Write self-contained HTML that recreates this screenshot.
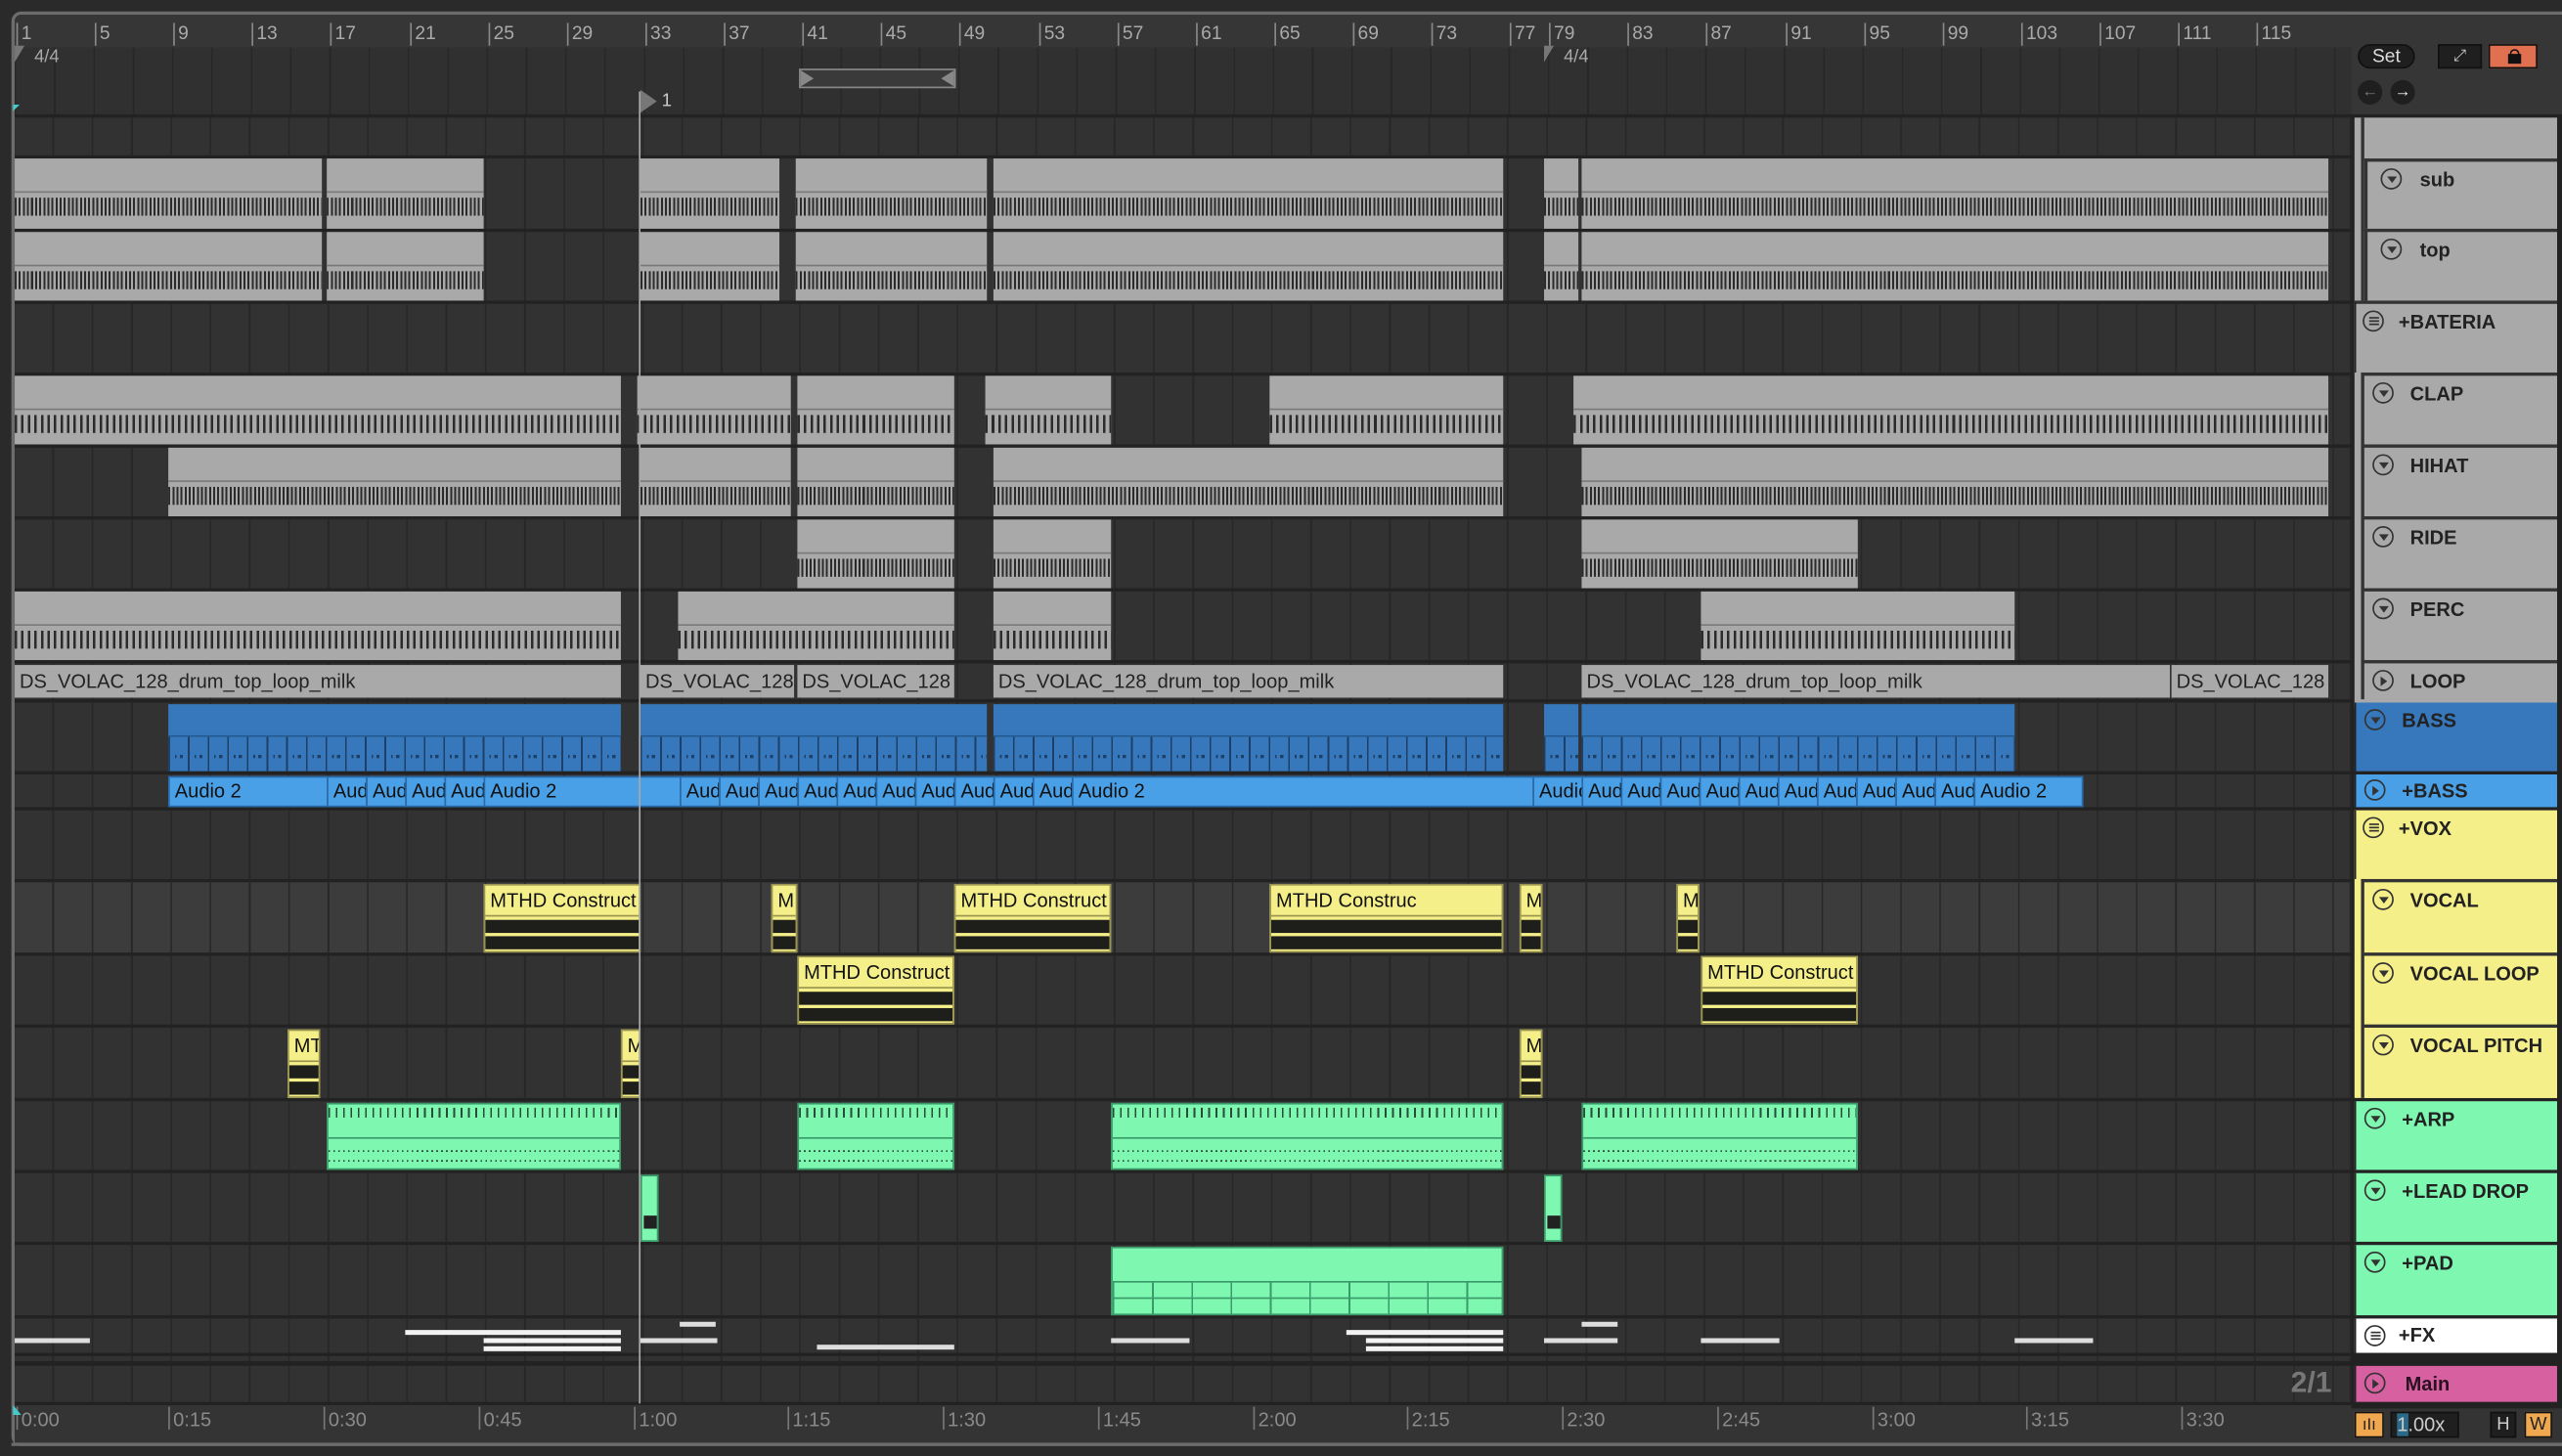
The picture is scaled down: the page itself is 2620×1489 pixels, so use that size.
<!DOCTYPE html>
<html><head><meta charset="utf-8"><style>
html,body{margin:0;padding:0;background:#2a2a2a;width:2620px;height:1488px;overflow:hidden}
#s{position:absolute;left:0;top:0;width:1568px;height:891px;transform:scale(1.67092);transform-origin:0 0;font-family:"Liberation Sans",sans-serif}
.a{position:absolute;box-sizing:border-box}
.frame{left:7px;top:7px;width:1570px;height:878px;border:2px solid #6c6c6c;border-radius:6px;background:#333}
.lane{position:absolute;left:9px;width:1430px;background:#323232 repeating-linear-gradient(90deg,#272727 0 1px,transparent 1px 24.06px);background-position:-1px 0}
.num{position:absolute;top:14px;font-size:11.5px;color:#aaa;border-left:1px solid #888;padding-left:2px;height:14px;line-height:14px}
.g{position:absolute;box-sizing:border-box;background:
 repeating-linear-gradient(90deg,#2b2b2b 0 1.2px,transparent 1.2px 2.5px) 0 24px/100% 11px no-repeat,
 linear-gradient(#7a7a7a,#7a7a7a) 0 20px/100% 1px no-repeat,#a9a9a9}
.gs{background:repeating-linear-gradient(90deg,#2b2b2b 0 1.5px,transparent 1.5px 4px) 0 24px/100% 11px no-repeat,linear-gradient(#7a7a7a,#7a7a7a) 0 20px/100% 1px no-repeat,#a9a9a9}
.lp{position:absolute;height:20px;top:407px;background:#a9a9a9;font-size:12px;line-height:20px;color:#222;padding-left:3px;overflow:hidden;white-space:nowrap;box-sizing:border-box}
.b{position:absolute;top:431px;height:41px;box-sizing:border-box;background:
 repeating-linear-gradient(90deg,transparent 0 4px,#1d3f68 4px 5px,transparent 5px 7px,#1d3f68 7px 9px,transparent 9px 12.03px) 0 31px/100% 2px no-repeat,
 repeating-linear-gradient(90deg,#1d3f68 0 1px,transparent 1px 12.03px) 0 20px/100% 21px no-repeat,
 linear-gradient(#245a92,#245a92) 0 19px/100% 1px no-repeat,#3678bb}
.ab{position:absolute;top:475px;height:19px;background:#4aa0e6;border-top:1px solid #2a6aaa;border-bottom:1px solid #2a6aaa;border-left:1px solid #2a6aaa;font-size:12px;line-height:17px;color:#111;padding-left:3px;box-sizing:border-box;overflow:hidden;white-space:nowrap}
.y{position:absolute;height:42px;box-sizing:border-box;border:1px solid #9a9450;font-size:12px;line-height:18px;color:#111;padding-left:3px;overflow:hidden;white-space:nowrap;background:
 linear-gradient(#1e1e1a,#1e1e1a) 0 21px/100% 8px no-repeat,
 linear-gradient(#1e1e1a,#1e1e1a) 0 31px/100% 8px no-repeat,
 linear-gradient(#9a9450,#9a9450) 0 18px/100% 1px no-repeat,#f4ef88}
.gr{position:absolute;top:675px;height:41px;box-sizing:border-box;border:1px solid #3a9a6a;background:
 repeating-linear-gradient(90deg,#2a4a3a 0 1px,transparent 1px 3px) 0 28px/100% 1px no-repeat,
 repeating-linear-gradient(90deg,#2a4a3a 0 1px,transparent 1px 3px) 0 34px/100% 1px no-repeat,
 repeating-linear-gradient(90deg,#2a4a3a 0 1px,transparent 1px 4.5px) 0 2px/100% 6px no-repeat,
 linear-gradient(#3a9a6a,#3a9a6a) 0 20px/100% 1px no-repeat,#7ef7b0}
.fx{position:absolute;height:3px;background:#f2f2f2}
.tp{position:absolute;left:1441px;width:124px;box-sizing:border-box;font-size:12px;font-weight:bold;color:#222;padding-left:32px;line-height:22px;border-left:1px solid #222}
.ic{position:absolute;left:8px;top:4px;width:13px;height:13px;border:1.3px solid #333;border-radius:50%;box-sizing:border-box}
.ic:after{content:"";position:absolute;left:2.5px;top:4px;border-left:3.2px solid transparent;border-right:3.2px solid transparent;border-top:4px solid #333}
.ic.pl:after{left:4px;top:2.5px;border-top:3.2px solid transparent;border-bottom:3.2px solid transparent;border-left:4.5px solid #333;border-right:none}
.ic.ls:after{left:2.5px;top:3px;width:6px;height:5px;border:none;background:linear-gradient(#333,#333) 0 0/100% 1.2px no-repeat,linear-gradient(#333,#333) 0 2.2px/100% 1.2px no-repeat,linear-gradient(#333,#333) 0 4.2px/100% 1.2px no-repeat}
.tl{position:absolute;top:861px;font-size:12px;color:#8a8a8a;border-left:1px solid #777;padding-left:2px;height:14px;line-height:16px}
</style></head><body><div id="s">
<div class="a frame"></div>
<div class="a" style="left:9px;top:9px;width:1430px;height:20px;background:#363636;border-radius:4px 0 0 0"></div>
<div class="a" style="left:9px;top:29px;width:1430px;height:41px;background:#303030 repeating-linear-gradient(90deg,#272727 0 1px,transparent 1px 24.06px)"></div>
<div class="num" style="left:10px">1</div><div class="num" style="left:58px">5</div><div class="num" style="left:106px">9</div><div class="num" style="left:154px">13</div><div class="num" style="left:202px">17</div><div class="num" style="left:251px">21</div><div class="num" style="left:299px">25</div><div class="num" style="left:347px">29</div><div class="num" style="left:395px">33</div><div class="num" style="left:443px">37</div><div class="num" style="left:491px">41</div><div class="num" style="left:539px">45</div><div class="num" style="left:587px">49</div><div class="num" style="left:636px">53</div><div class="num" style="left:684px">57</div><div class="num" style="left:732px">61</div><div class="num" style="left:780px">65</div><div class="num" style="left:828px">69</div><div class="num" style="left:876px">73</div><div class="num" style="left:924px">77</div><div class="num" style="left:948px">79</div><div class="num" style="left:996px">83</div><div class="num" style="left:1044px">87</div><div class="num" style="left:1093px">91</div><div class="num" style="left:1141px">95</div><div class="num" style="left:1189px">99</div><div class="num" style="left:1237px">103</div><div class="num" style="left:1285px">107</div><div class="num" style="left:1333px">111</div><div class="num" style="left:1381px">115</div>
<div class="a" style="left:9px;top:28px;width:0;height:0;border-left:6px solid #777;border-bottom:10px solid transparent"></div>
<div class="a" style="left:21px;top:29px;font-size:11px;color:#aaa">4/4</div>
<div class="a" style="left:945px;top:28px;width:0;height:0;border-left:6px solid #777;border-bottom:10px solid transparent"></div>
<div class="a" style="left:957px;top:29px;font-size:11px;color:#aaa">4/4</div>
<div class="a" style="left:489px;top:42px;width:96px;height:12px;border:1px solid #888;background:#3a3a3a"></div>
<div class="a" style="left:490px;top:43px;width:0;height:0;border-left:8px solid #888;border-top:5px solid transparent;border-bottom:5px solid transparent"></div>
<div class="a" style="left:576px;top:43px;width:0;height:0;border-right:8px solid #888;border-top:5px solid transparent;border-bottom:5px solid transparent"></div>
<div class="a" style="left:392px;top:55px;width:0;height:0;border-left:10px solid #777;border-top:7px solid transparent;border-bottom:7px solid transparent"></div>
<div class="a" style="left:405px;top:56px;font-size:11px;color:#ccc">1</div>
<div class="a" style="left:8px;top:64px;width:0;height:0;border-left:4px solid #4cc;border-bottom:4px solid transparent"></div>
<div class="a" style="left:9px;top:70px;width:1430px;height:790px;background:#222"></div>
<div class="lane" style="top:72px;height:23px"></div>
<div class="lane" style="top:97px;height:43px"></div>
<div class="lane" style="top:142px;height:42px"></div>
<div class="lane" style="top:186px;height:42px"></div>
<div class="lane" style="top:230px;height:42px"></div>
<div class="lane" style="top:274px;height:42px"></div>
<div class="lane" style="top:318px;height:42px"></div>
<div class="lane" style="top:362px;height:42px"></div>
<div class="lane" style="top:406px;height:22px"></div>
<div class="lane" style="top:430px;height:42px"></div>
<div class="lane" style="top:474px;height:20px"></div>
<div class="lane" style="top:496px;height:42px"></div>
<div class="lane" style="top:540px;height:43px;background-color:#3c3c3c"></div>
<div class="lane" style="top:585px;height:42px"></div>
<div class="lane" style="top:629px;height:43px"></div>
<div class="lane" style="top:674px;height:42px"></div>
<div class="lane" style="top:718px;height:42px"></div>
<div class="lane" style="top:762px;height:43px"></div>
<div class="lane" style="top:807px;height:21px"></div>
<div class="lane" style="top:830px;height:3px"></div>
<div class="lane" style="top:836px;height:22px"></div>
<div class="g" style="left:9px;top:97px;width:188px;height:43px"></div><div class="g" style="left:200px;top:97px;width:96px;height:43px"></div><div class="g" style="left:392px;top:97px;width:85px;height:43px"></div><div class="g" style="left:487px;top:97px;width:117px;height:43px"></div><div class="g" style="left:608px;top:97px;width:312px;height:43px"></div><div class="g" style="left:945px;top:97px;width:21px;height:43px"></div><div class="g" style="left:968px;top:97px;width:457px;height:43px"></div>
<div class="g" style="left:9px;top:142px;width:188px;height:42px"></div><div class="g" style="left:200px;top:142px;width:96px;height:42px"></div><div class="g" style="left:392px;top:142px;width:85px;height:42px"></div><div class="g" style="left:487px;top:142px;width:117px;height:42px"></div><div class="g" style="left:608px;top:142px;width:312px;height:42px"></div><div class="g" style="left:945px;top:142px;width:21px;height:42px"></div><div class="g" style="left:968px;top:142px;width:457px;height:42px"></div>
<div class="g gs" style="left:9px;top:230px;width:371px;height:42px"></div><div class="g gs" style="left:390px;top:230px;width:94px;height:42px"></div><div class="g gs" style="left:488px;top:230px;width:96px;height:42px"></div><div class="g gs" style="left:603px;top:230px;width:77px;height:42px"></div><div class="g gs" style="left:777px;top:230px;width:143px;height:42px"></div><div class="g gs" style="left:963px;top:230px;width:462px;height:42px"></div>
<div class="g" style="left:103px;top:274px;width:277px;height:42px"></div><div class="g" style="left:392px;top:274px;width:92px;height:42px"></div><div class="g" style="left:488px;top:274px;width:96px;height:42px"></div><div class="g" style="left:608px;top:274px;width:312px;height:42px"></div><div class="g" style="left:968px;top:274px;width:457px;height:42px"></div>
<div class="g" style="left:488px;top:318px;width:96px;height:42px"></div><div class="g" style="left:608px;top:318px;width:72px;height:42px"></div><div class="g" style="left:968px;top:318px;width:169px;height:42px"></div>
<div class="g gs" style="left:9px;top:362px;width:371px;height:42px"></div><div class="g gs" style="left:415px;top:362px;width:169px;height:42px"></div><div class="g gs" style="left:608px;top:362px;width:72px;height:42px"></div><div class="g gs" style="left:1041px;top:362px;width:192px;height:42px"></div>
<div class="lp" style="left:9px;width:371px">DS_VOLAC_128_drum_top_loop_milk</div><div class="lp" style="left:392px;width:94px">DS_VOLAC_128</div><div class="lp" style="left:488px;width:96px">DS_VOLAC_128</div><div class="lp" style="left:608px;width:312px">DS_VOLAC_128_drum_top_loop_milk</div><div class="lp" style="left:968px;width:360px">DS_VOLAC_128_drum_top_loop_milk</div><div class="lp" style="left:1329px;width:96px">DS_VOLAC_128</div>
<div class="b" style="left:103px;width:277px"></div><div class="b" style="left:392px;width:212px"></div><div class="b" style="left:608px;width:312px"></div><div class="b" style="left:945px;width:21px"></div><div class="b" style="left:968px;width:265px"></div>
<div class="ab" style="left:103px;width:97px">Audio 2</div><div class="ab" style="left:200px;width:24px">Aud</div><div class="ab" style="left:224px;width:24px">Aud</div><div class="ab" style="left:248px;width:24px">Aud</div><div class="ab" style="left:272px;width:24px">Aud</div><div class="ab" style="left:296px;width:120px">Audio 2</div><div class="ab" style="left:416px;width:24px">Aud</div><div class="ab" style="left:440px;width:24px">Aud</div><div class="ab" style="left:464px;width:24px">Aud</div><div class="ab" style="left:488px;width:24px">Aud</div><div class="ab" style="left:512px;width:24px">Aud</div><div class="ab" style="left:536px;width:24px">Aud</div><div class="ab" style="left:560px;width:24px">Aud</div><div class="ab" style="left:584px;width:24px">Aud</div><div class="ab" style="left:608px;width:24px">Aud</div><div class="ab" style="left:632px;width:24px">Aud</div><div class="ab" style="left:656px;width:282px">Audio 2</div><div class="ab" style="left:938px;width:30px">Audio</div><div class="ab" style="left:968px;width:24px">Aud</div><div class="ab" style="left:992px;width:24px">Aud</div><div class="ab" style="left:1016px;width:24px">Aud</div><div class="ab" style="left:1040px;width:24px">Aud</div><div class="ab" style="left:1064px;width:24px">Aud</div><div class="ab" style="left:1088px;width:24px">Aud</div><div class="ab" style="left:1112px;width:24px">Aud</div><div class="ab" style="left:1136px;width:24px">Aud</div><div class="ab" style="left:1160px;width:24px">Aud</div><div class="ab" style="left:1184px;width:24px">Aud</div><div class="ab" style="left:1208px;width:67px;border-right:1px solid #2a6aaa">Audio 2</div>
<div class="y" style="left:296px;top:541px;width:96px">MTHD Construct</div><div class="y" style="left:472px;top:541px;width:16px">M</div><div class="y" style="left:584px;top:541px;width:96px">MTHD Construct</div><div class="y" style="left:777px;top:541px;width:143px">MTHD Construc</div><div class="y" style="left:930px;top:541px;width:14px">M</div><div class="y" style="left:1026px;top:541px;width:14px">M</div>
<div class="y" style="left:488px;top:585px;width:96px">MTHD Construct</div><div class="y" style="left:1041px;top:585px;width:96px">MTHD Construct</div>
<div class="y" style="left:176px;top:630px;width:20px">MT</div><div class="y" style="left:380px;top:630px;width:12px">M</div><div class="y" style="left:930px;top:630px;width:14px">M</div>
<div class="gr" style="left:200px;width:180px"></div><div class="gr" style="left:488px;width:96px"></div><div class="gr" style="left:680px;width:240px"></div><div class="gr" style="left:968px;width:169px"></div>
<div class="a" style="left:392px;top:719px;width:11px;height:41px;background:#7ef7b0;border:1px solid #3a9a6a"><div class="a" style="left:1px;top:24px;width:8px;height:8px;background:#222"></div></div>
<div class="a" style="left:945px;top:719px;width:11px;height:41px;background:#7ef7b0;border:1px solid #3a9a6a"><div class="a" style="left:1px;top:24px;width:8px;height:8px;background:#222"></div></div>
<div class="a" style="left:680px;top:763px;width:240px;height:42px;border:1px solid #3a9a6a;background:linear-gradient(#3a9a6a,#3a9a6a) 0 20px/100% 1px no-repeat,linear-gradient(#3a9a6a,#3a9a6a) 0 30px/100% 1px no-repeat,repeating-linear-gradient(90deg,#3a9a6a 0 1px,transparent 1px 24.06px) 0 20px/100% 22px no-repeat,#7ef7b0"></div>
<div class="fx" style="left:9px;top:819px;width:46px;background:#ddd"></div><div class="fx" style="left:248px;top:814px;width:132px"></div><div class="fx" style="left:296px;top:819px;width:84px"></div><div class="fx" style="left:296px;top:824px;width:84px"></div><div class="fx" style="left:392px;top:819px;width:47px;background:#ddd"></div><div class="fx" style="left:416px;top:809px;width:22px;background:#ddd"></div><div class="fx" style="left:500px;top:823px;width:84px;background:#ddd"></div><div class="fx" style="left:680px;top:819px;width:48px;background:#ddd"></div><div class="fx" style="left:824px;top:814px;width:96px"></div><div class="fx" style="left:836px;top:819px;width:84px"></div><div class="fx" style="left:836px;top:824px;width:84px"></div><div class="fx" style="left:945px;top:819px;width:45px;background:#ddd"></div><div class="fx" style="left:968px;top:809px;width:22px;background:#ddd"></div><div class="fx" style="left:1041px;top:819px;width:48px;background:#ddd"></div><div class="fx" style="left:1233px;top:819px;width:48px;background:#ddd"></div>
<div class="a" style="left:391px;top:56px;width:1px;height:803px;background:#a8a8a8"></div>
<div class="a" style="left:9px;top:860px;width:1560px;height:23px;background:#343434"></div>
<div class="tl" style="left:10px">0:00</div><div class="tl" style="left:103px">0:15</div><div class="tl" style="left:198px">0:30</div><div class="tl" style="left:293px">0:45</div><div class="tl" style="left:388px">1:00</div><div class="tl" style="left:482px">1:15</div><div class="tl" style="left:577px">1:30</div><div class="tl" style="left:672px">1:45</div><div class="tl" style="left:767px">2:00</div><div class="tl" style="left:861px">2:15</div><div class="tl" style="left:956px">2:30</div><div class="tl" style="left:1051px">2:45</div><div class="tl" style="left:1146px">3:00</div><div class="tl" style="left:1240px">3:15</div><div class="tl" style="left:1335px">3:30</div>
<div class="a" style="left:8px;top:860px;width:0;height:0;border-left:5px solid #4cc;border-top:6px solid transparent"></div>
<div class="a" style="left:7px;top:883px;width:1570px;height:2px;background:#6c6c6c"></div>
<div class="a" style="left:1439px;top:9px;width:130px;height:61px;background:#363636"></div>
<div class="a" style="left:1443px;top:27px;width:35px;height:15px;border-radius:8px;background:#1f1f1f;border:1px solid #111;color:#ddd;font-size:11.5px;line-height:14px;text-align:center">Set</div>
<div class="a" style="left:1492px;top:27px;width:27px;height:15px;background:#1f1f1f;border:1px solid #111;color:#ccc;font-size:10px;line-height:14px;text-align:center">⤢</div>
<div class="a" style="left:1523px;top:27px;width:30px;height:15px;background:#e07050;border:1px solid #111"><div class="a" style="left:11px;top:5px;width:8px;height:6px;background:#111"></div><div class="a" style="left:12px;top:2px;width:6px;height:5px;border:1.5px solid #111;border-bottom:none;border-radius:3px 3px 0 0"></div></div>
<div class="a" style="left:1443px;top:49px;width:15px;height:15px;border-radius:50%;background:#1f1f1f;color:#777;font-size:10px;line-height:15px;text-align:center">←</div>
<div class="a" style="left:1463px;top:49px;width:15px;height:15px;border-radius:50%;background:#1f1f1f;color:#eee;font-size:10px;line-height:15px;text-align:center">→</div>
<div class="a" style="left:1439px;top:70px;width:130px;height:792px;background:#222"></div>
<div class="a" style="left:1441px;top:72px;width:124px;height:362px;background:#a9a9a9"></div>
<div class="a" style="left:1445px;top:72px;width:2px;height:112px;background:#333"></div>
<div class="tp" style="left:1447px;top:97px;width:118px;height:43px;background:#a9a9a9;border-top:2px solid #333;border-left:2px solid #333"><span class="ic"></span>sub</div>
<div class="tp" style="left:1447px;top:140px;width:118px;height:44px;background:#a9a9a9;border-top:2px solid #333;border-left:2px solid #333"><span class="ic"></span>top</div>
<div class="tp" style="left:1441px;top:184px;height:44px;background:#a9a9a9;border-top:2px solid #333;padding-left:26px"><span class="ic ls" style="left:4px"></span>+BATERIA</div>
<div class="tp" style="left:1445px;top:228px;width:120px;height:44px;background:#a9a9a9;border-top:2px solid #333;border-left:2px solid #333;padding-left:28px"><span class="ic" style="left:5px"></span>CLAP</div>
<div class="tp" style="left:1445px;top:272px;width:120px;height:44px;background:#a9a9a9;border-top:2px solid #333;border-left:2px solid #333;padding-left:28px"><span class="ic" style="left:5px"></span>HIHAT</div>
<div class="tp" style="left:1445px;top:316px;width:120px;height:44px;background:#a9a9a9;border-top:2px solid #333;border-left:2px solid #333;padding-left:28px"><span class="ic" style="left:5px"></span>RIDE</div>
<div class="tp" style="left:1445px;top:360px;width:120px;height:44px;background:#a9a9a9;border-top:2px solid #333;border-left:2px solid #333;padding-left:28px"><span class="ic" style="left:5px"></span>PERC</div>
<div class="tp" style="left:1445px;top:404px;width:120px;height:24px;background:#a9a9a9;border-top:2px solid #333;border-left:2px solid #333;padding-left:28px"><span class="ic pl" style="left:5px"></span>LOOP</div>
<div class="tp" style="top:430px;height:42px;background:#3678bb;padding-left:28px"><span class="ic" style="left:5px"></span>BASS</div>
<div class="tp" style="top:474px;height:20px;background:#4aa0e6;padding-left:28px;line-height:20px"><span class="ic pl" style="left:5px;top:3px"></span>+BASS</div>
<div class="a" style="left:1441px;top:496px;width:124px;height:176px;background:#f4ef88"></div>
<div class="tp" style="top:496px;height:42px;background:#f4ef88;padding-left:26px"><span class="ic ls" style="left:4px"></span>+VOX</div>
<div class="tp" style="left:1445px;top:538px;width:120px;height:45px;background:#f4ef88;border-top:2px solid #333;border-left:2px solid #333;padding-left:28px"><span class="ic" style="left:5px"></span>VOCAL</div>
<div class="tp" style="left:1445px;top:583px;width:120px;height:44px;background:#f4ef88;border-top:2px solid #333;border-left:2px solid #333;padding-left:28px"><span class="ic" style="left:5px"></span>VOCAL LOOP</div>
<div class="tp" style="left:1445px;top:627px;width:120px;height:45px;background:#f4ef88;border-top:2px solid #333;border-left:2px solid #333;padding-left:28px"><span class="ic" style="left:5px"></span>VOCAL PITCH</div>
<div class="tp" style="top:674px;height:42px;background:#7ef7b0;padding-left:28px"><span class="ic" style="left:5px"></span>+ARP</div>
<div class="tp" style="top:718px;height:42px;background:#7ef7b0;padding-left:28px"><span class="ic" style="left:5px"></span>+LEAD DROP</div>
<div class="tp" style="top:762px;height:43px;background:#7ef7b0;padding-left:28px"><span class="ic" style="left:5px"></span>+PAD</div>
<div class="tp" style="top:807px;height:21px;background:#fff;padding-left:26px;line-height:21px"><span class="ic ls" style="left:5px;top:4px"></span>+FX</div>
<div class="tp" style="top:836px;height:22px;background:#d660a0;padding-left:30px;color:#2a1020"><span class="ic pl" style="left:5px"></span>Main</div>
<div class="a" style="left:1402px;top:836px;font-size:18px;font-weight:bold;color:#777">2/1</div>
<div class="a" style="left:1441px;top:864px;width:18px;height:16px;background:#f0a850;border:1px solid #111;font-size:10px;text-align:center;line-height:15px;color:#222">ıIı</div>
<div class="a" style="left:1463px;top:864px;width:42px;height:16px;background:#1f1f1f;border:1px solid #111;font-size:12px;line-height:15px;color:#ccc;padding-left:3px"><span style="background:#2a6a88">1</span>.00x</div>
<div class="a" style="left:1524px;top:864px;width:16px;height:16px;background:#1f1f1f;border:1px solid #111;font-size:11px;line-height:15px;color:#ccc;text-align:center">H</div>
<div class="a" style="left:1545px;top:864px;width:17px;height:16px;background:#f0a850;border:1px solid #111;font-size:11px;line-height:15px;color:#222;text-align:center">W</div>
</div></body></html>
